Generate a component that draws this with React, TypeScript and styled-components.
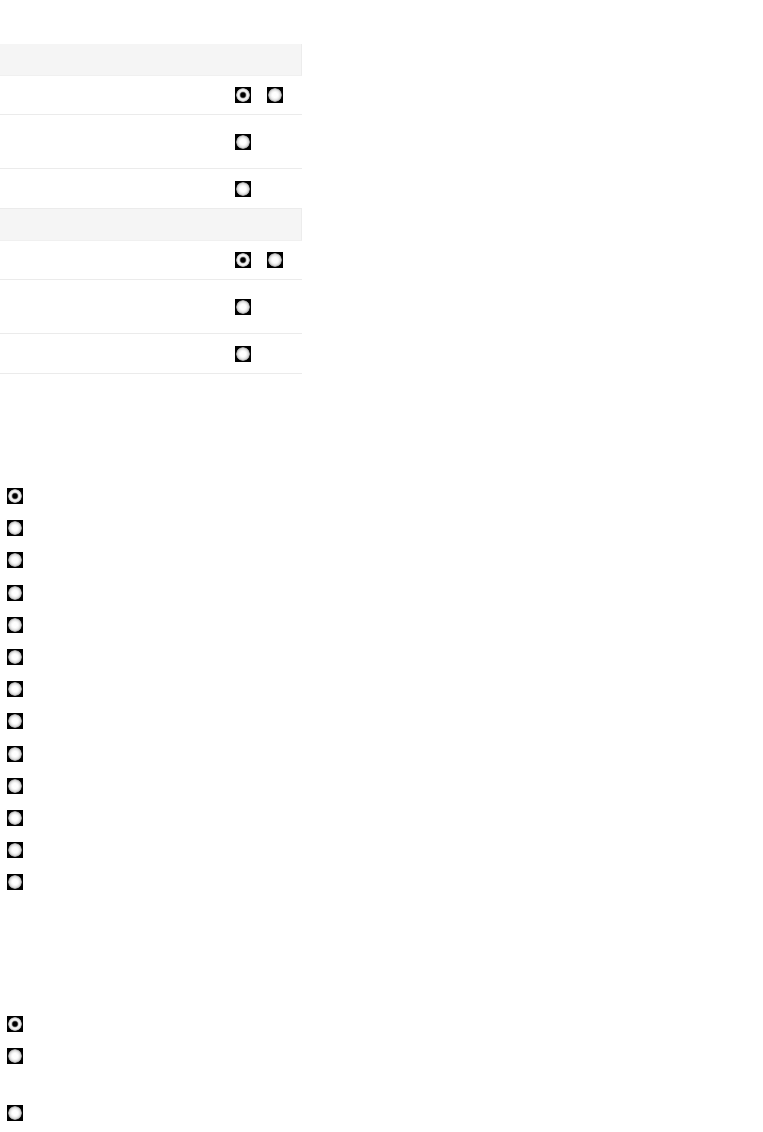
import React from "react";
import styled, { createGlobalStyle } from "styled-components";

const Global = createGlobalStyle`
  html, body { margin: 0; padding: 0; background: #fff; }
  body { font-family: "Liberation Sans", Arial, sans-serif; font-size: 14px; color: #fff; }
`;

const Page = styled.div`
  display: flex;
  flex-direction: column;
  padding-top: 44px;
`;

const Table = styled.div`
  width: 302px;
  display: flex;
  flex-direction: column;
`;

const HeadRow = styled.div`
  height: 32px;
  background: #f5f5f5;
  border-bottom: 1px solid #f0f0f0;
  box-sizing: border-box;
  border-right: 1px solid #ececec;
`;

const Row = styled.div<{ $h: number }>`
  height: ${(p) => p.$h}px;
  box-sizing: border-box;
  border-bottom: 1px solid #ebebeb;
  display: grid;
  grid-template-columns: 235px 1fr;
  align-items: center;
`;

const Cell = styled.div`
  display: flex;
  align-items: center;
  gap: 16px;
`;

const Radio = styled.span<{ $checked?: boolean }>`
  width: 16px;
  height: 16px;
  background: #000;
  display: inline-flex;
  align-items: center;
  justify-content: center;
  flex: none;
  &::after {
    content: "";
    width: 14px;
    height: 14px;
    border-radius: 50%;
    filter: blur(0.4px);
    background: ${(p) =>
      p.$checked
        ? "radial-gradient(circle, #000 0 2px, #555 2.8px, #ddd 3.6px, #fafafa 4.6px, #e6e6e6 5.6px, #a8a8a8 6.6px, #333 7px)"
        : "radial-gradient(circle, #fff 0 2.5px, #f2f2f2 4px, #d8d8d8 5.5px, #a0a0a0 6.5px, #333 7px)"};
  }
`;

const List = styled.div<{ $mt: number }>`
  display: flex;
  flex-direction: column;
  margin-top: ${(p) => p.$mt}px;
  padding-left: 7px;
`;

const Item = styled.div<{ $h?: number }>`
  height: ${(p) => p.$h ?? 32}px;
  display: flex;
  align-items: flex-start;
  padding-top: 8px;
  box-sizing: border-box;
`;

const Group: React.FC = () => (
  <>
    <HeadRow />
    <Row $h={39}>
      <span />
      <Cell>
        <Radio $checked />
        <Radio />
      </Cell>
    </Row>
    <Row $h={54}>
      <span />
      <Cell>
        <Radio />
      </Cell>
    </Row>
    <Row $h={40}>
      <span />
      <Cell>
        <Radio />
      </Cell>
    </Row>
  </>
);

export default function App() {
  return (
    <>
      <Global />
      <Page>
        <Table>
          <Group />
          <Group />
        </Table>
        <List $mt={106}>
          {Array.from({ length: 13 }).map((_, i) => (
            <Item key={i} $h={32.2}>
              <Radio $checked={i === 0} />
            </Item>
          ))}
        </List>
        <List $mt={110}>
          <Item>
            <Radio $checked />
          </Item>
          <Item $h={57}>
            <Radio />
          </Item>
          <Item>
            <Radio />
          </Item>
        </List>
      </Page>
    </>
  );
}
